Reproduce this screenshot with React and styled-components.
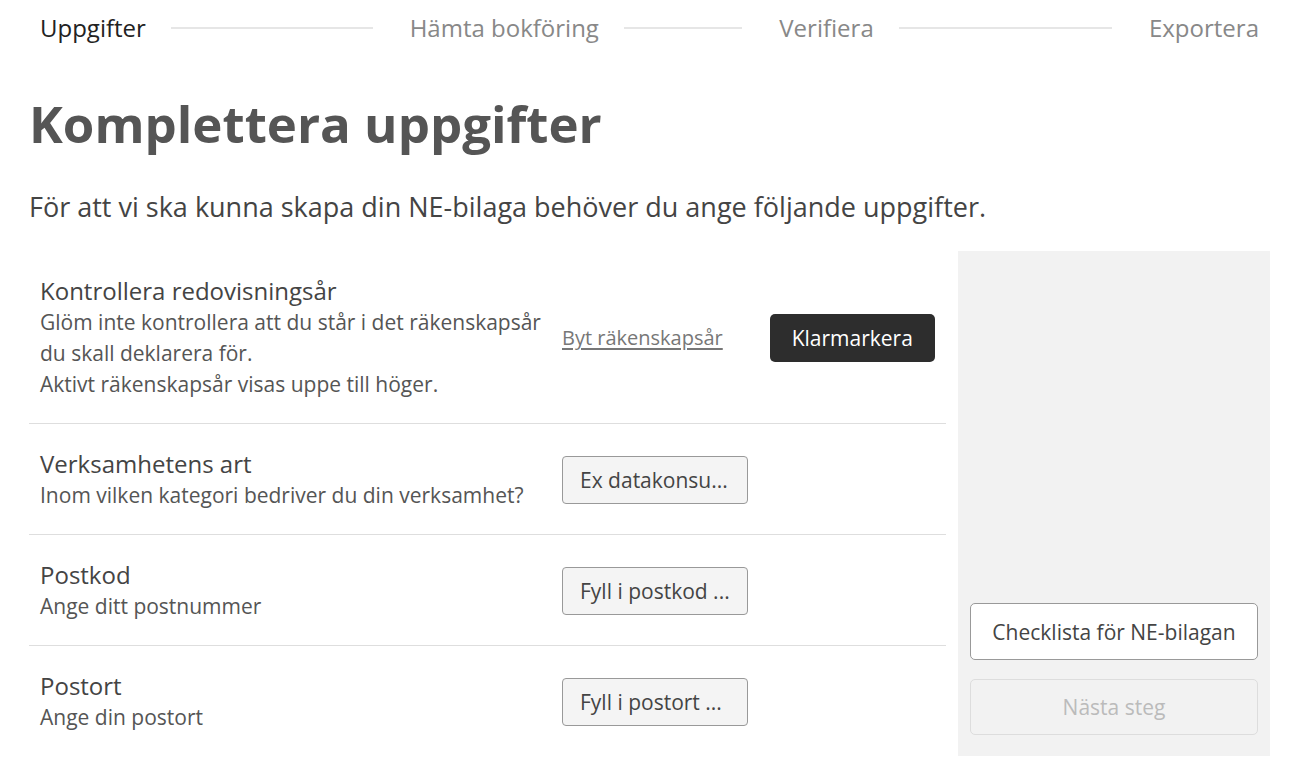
import styled, { createGlobalStyle } from 'styled-components'

const Global = createGlobalStyle`
  html, body { margin:0; padding:0; background:#fff; }
  body { font-family:'Open Sans', 'Noto Sans', sans-serif; color:#444; }
  * { box-sizing:border-box; }
`

const Page = styled.div`
  padding:0 41px 0 29px;
`

const Stepper = styled.div`
  display:flex; align-items:center; margin:0 11px; height:55px;
`
const Step = styled.div`
  display:flex; align-items:center; flex:${p => p.last ? '0 0 auto' : '1 1 0'};
`
const StepLabel = styled.div`
  font-size:24px; color:${p => p.active ? '#222' : '#888'}; white-space:nowrap;
`
const StepLine = styled.div`
  flex:1; height:2px; background:#e6e6e6; margin:1px 37px 0 25px;
`

const Title = styled.h1`
  font-size:51px; font-weight:700; color:#555; margin:36px 0 0 0; line-height:64px;
`
const Lead = styled.p`
  font-size:27px; color:#444; margin:35px 0 0 0; line-height:34px;
`

const Main = styled.div`
  display:flex; gap:12px; margin-top:27px;
`
const List = styled.div`
  flex:1;
`
const Row = styled.div`
  display:flex; align-items:center; padding:24px 11px 23px;
  border-bottom:${p => p.last ? 'none' : '1px solid #dedede'};
`
const Info = styled.div`
  flex:0 0 522px;
`
const RowTitle = styled.div`
  font-size:24px; line-height:32px; color:#444;
`
const RowDesc = styled.div`
  font-size:21px; line-height:31px; color:#555;
`
const Actions = styled.div`
  display:flex; align-items:center; gap:47px;
`
const LinkText = styled.a`
  font-size:20px; color:#777; text-decoration:underline; text-underline-offset:3px; cursor:pointer;
`
const DarkButton = styled.button`
  font-family:inherit; font-size:21px; color:#fff; background:#2d2d2d;
  border:none; border-radius:5px; height:48px; width:165px; cursor:pointer;
`
const FieldButton = styled.button`
  font-family:inherit; font-size:21px; color:#444; background:#f4f4f4;
  border:1px solid #999; border-radius:4px; height:48px; width:186px;
  text-align:left; padding:0 17px; white-space:nowrap; overflow:hidden; cursor:pointer;
`

const Side = styled.div`
  flex:0 0 312px; background:#f2f2f2; display:flex; flex-direction:column;
  justify-content:flex-end; gap:19px; padding:12px 12px 21px; min-height:503px;
`
const SideButton = styled.button`
  font-family:inherit; font-size:21px; height:${p => p.disabled ? '56px' : '57px'}; border-radius:5px;
  background:${p => p.disabled ? '#f2f2f2' : '#fff'};
  color:${p => p.disabled ? '#bbb' : '#444'};
  border:1px solid ${p => p.disabled ? '#ddd' : '#999'};
  cursor:${p => p.disabled ? 'default' : 'pointer'};
`

const steps = ['Uppgifter', 'Hämta bokföring', 'Verifiera', 'Exportera']

const rows = [
  { title: 'Verksamhetens art', desc: ['Inom vilken kategori bedriver du din verksamhet?'], value: 'Ex datakonsu...' },
  { title: 'Postkod', desc: ['Ange ditt postnummer'], value: 'Fyll i postkod ...' },
  { title: 'Postort', desc: ['Ange din postort'], value: 'Fyll i postort ...' },
]

export default function App() {
  return (
    <Page>
      <Global />
      <Stepper>
        {steps.map((s, i) => (
          <Step key={s} last={i === steps.length - 1}>
            <StepLabel active={i === 0}>{s}</StepLabel>
            {i < steps.length - 1 && <StepLine />}
          </Step>
        ))}
      </Stepper>

      <Title>Komplettera uppgifter</Title>
      <Lead>För att vi ska kunna skapa din NE-bilaga behöver du ange följande uppgifter.</Lead>

      <Main>
        <List>
          <Row>
            <Info>
              <RowTitle>Kontrollera redovisningsår</RowTitle>
              <RowDesc>Glöm inte kontrollera att du står i det räkenskapsår<br />du skall deklarera för.</RowDesc>
              <RowDesc>Aktivt räkenskapsår visas uppe till höger.</RowDesc>
            </Info>
            <Actions>
              <LinkText>Byt räkenskapsår</LinkText>
              <DarkButton>Klarmarkera</DarkButton>
            </Actions>
          </Row>
          {rows.map((r, i) => (
            <Row key={r.title} last={i === rows.length - 1}>
              <Info>
                <RowTitle>{r.title}</RowTitle>
                {r.desc.map(d => <RowDesc key={d}>{d}</RowDesc>)}
              </Info>
              <FieldButton>{r.value}</FieldButton>
            </Row>
          ))}
        </List>
        <Side>
          <SideButton>Checklista för NE-bilagan</SideButton>
          <SideButton disabled>Nästa steg</SideButton>
        </Side>
      </Main>
    </Page>
  )
}
